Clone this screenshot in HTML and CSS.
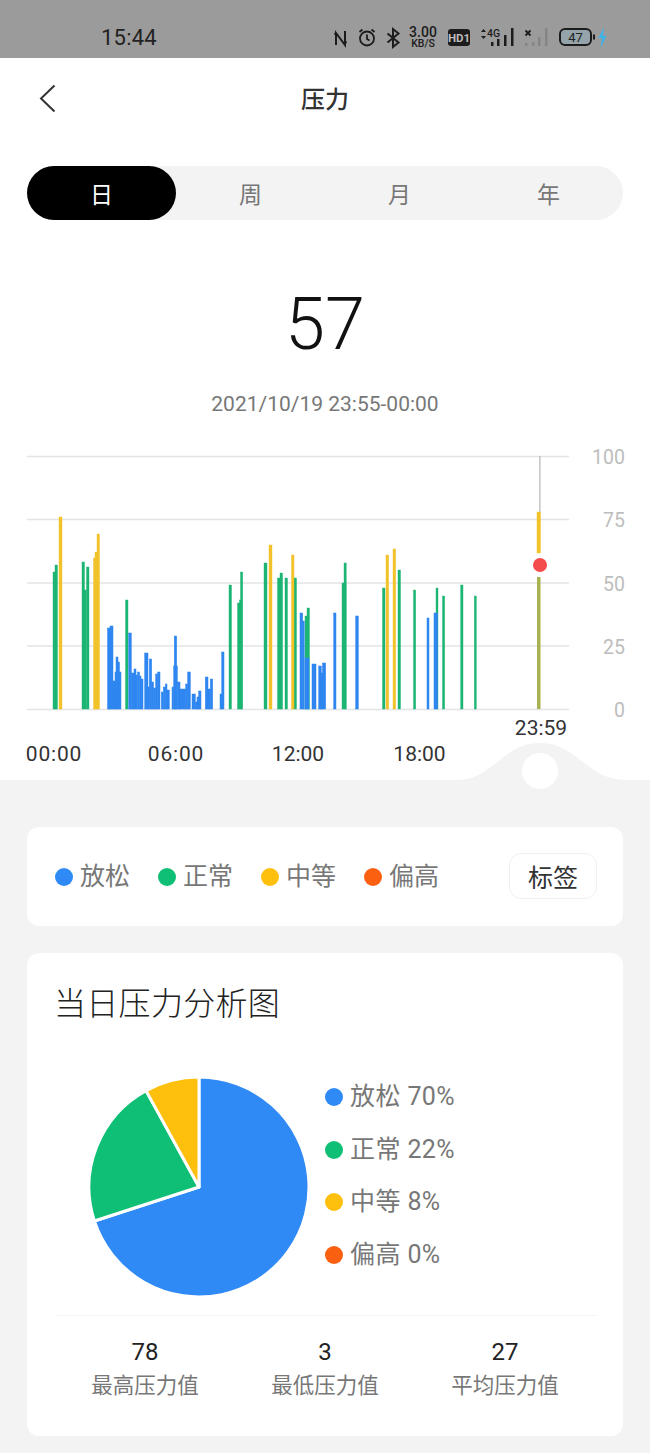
FILE: index.html
```html
<!DOCTYPE html>
<html lang="zh">
<head>
<meta charset="utf-8">
<title>压力</title>
<link rel="stylesheet" href="styles.css">
</head>
<body>
<div class="status">
  <span class="clock">15:44</span>
  <svg class="status-icons" width="280" height="26" viewBox="0 0 280 26">
    <path class="ink" d="M4 21V9l9 12V7M4 9l-1.500 1.500M13 19l1.500-1.500"/>
    <circle class="ink thin" cx="35" cy="14.500" r="7"/>
    <path class="ink thin" d="M35 10.500v4.500l2.500 1.500M27.500 8l3-2.500M42.500 8l-3-2.500"/>
    <path class="ink" d="M55.500 9.500l11 9-5.500 4.500V5l5.500 4.500-11 9"/>
    <text class="st-speed" x="91" y="13">3.00</text>
    <text class="st-unit" x="91" y="23">KB/S</text>
    <rect class="ink-fill" x="116" y="5" width="22" height="17" rx="3"/>
    <text class="st-hd" x="127" y="18">HD1</text>
    <path class="ink-fill" d="M149 8l2.500-3 2.500 3zM149 12l2.500 3 2.500-3z"/>
    <text class="st-net" x="155" y="13">4G</text>
    <rect class="ink-fill" x="159" y="18" width="2.500" height="4"/>
    <rect class="ink-fill" x="165" y="15" width="2.500" height="7"/>
    <rect class="ink-fill" x="172" y="11" width="2.500" height="11"/>
    <rect class="ink-fill" x="179" y="4" width="2.500" height="18"/>
    <path class="ink thin" d="M193.500 6.500l5 5M198.500 6.500l-5 5"/>
    <rect class="faint" x="193" y="19" width="2.500" height="3"/>
    <rect class="faint" x="200" y="18" width="2.500" height="4"/>
    <rect class="faint" x="206" y="13" width="2.500" height="9"/>
    <rect class="faint" x="213" y="4" width="2.500" height="18"/>
    <rect class="batt" x="228" y="5" width="31" height="16" rx="5"/>
    <rect class="ink-fill" x="261" y="10.500" width="2" height="5"/>
    <text class="st-batt" x="243.500" y="18">47</text>
    <path class="bolt" d="M272 3l-5.500 11h3.500l-1.500 10 6-12h-3.500z"/>
  </svg>
</div>

<main class="top">
  <header class="nav">
    <svg class="back" width="18" height="30" viewBox="0 0 18 30"><path d="M15.500 1.500L2 14.500 15.500 27.500"/></svg>
    <h1 class="title">压力</h1>
  </header>

  <div class="tabs">
    <span class="tab tab-on">日</span>
    <span class="tab">周</span>
    <span class="tab">月</span>
    <span class="tab">年</span>
  </div>

  <div class="value">57</div>
  <div class="range">2021/10/19 23:55-00:00</div>

  <svg class="chart" width="650" height="340" viewBox="0 440 650 340">
    <path class="bump" d="M457 780C492 780 503 743 540 743C577 743 588 780 625 780Z"/>
    <circle class="knob" cx="540" cy="771" r="18"/>
    <g class="grid">
      <path d="M27 456.500H569"/><path d="M27 519.500H569"/><path d="M27 583H569"/><path d="M27 646H569"/><path d="M27 709.500H569"/>
    </g>
    <g class="axis-y">
      <text x="625" y="464">100</text><text x="625" y="527">75</text><text x="625" y="591">50</text><text x="625" y="654">25</text><text x="625" y="717">0</text>
    </g>
    <g class="axis-x">
      <text class="wide" x="54" y="761">00:00</text><text class="wide" x="176" y="761">06:00</text><text x="298" y="761">12:00</text><text x="419.500" y="761">18:00</text><text x="541" y="735">23:59</text>
    </g>
    <g class="bar-green">
      <rect x="53" y="572" width="3" height="137"/><rect x="55" y="565" width="2.500" height="144"/>
      <rect x="82" y="562" width="2.500" height="147"/><rect x="84" y="590" width="2.500" height="119"/><rect x="86.500" y="567" width="2.500" height="142"/>
      <rect x="125.500" y="600" width="2.500" height="109"/>
      <rect x="229" y="585" width="2.500" height="124"/><rect x="237.500" y="603" width="2.500" height="106"/><rect x="239.500" y="600" width="2.500" height="109"/><rect x="240.500" y="572" width="2.200" height="137"/>
      <rect x="264" y="563" width="3" height="146"/>
      <rect x="277.500" y="578" width="4.500" height="131"/><rect x="280" y="573" width="2.500" height="136"/>
      <rect x="285" y="578" width="2.500" height="131"/>
      <rect x="293.500" y="578" width="3" height="131"/>
      <rect x="305" y="616" width="3" height="93"/><rect x="307" y="608" width="2.500" height="101"/>
      <rect x="342" y="583" width="4" height="126"/><rect x="344" y="563" width="2.200" height="146"/>
      <rect x="382.500" y="588" width="2.500" height="121"/><rect x="398" y="570" width="2.500" height="139"/>
      <rect x="413.500" y="590" width="2.200" height="119"/><rect x="436" y="588" width="2" height="121"/>
      <rect x="442.500" y="596" width="2.200" height="113"/><rect x="460.700" y="585" width="2.300" height="124"/><rect x="474.300" y="596" width="2" height="113"/>
    </g>
    <g class="bar-yellow">
      <rect x="59" y="517" width="3" height="192"/>
      <rect x="93.500" y="558" width="2.500" height="151"/><rect x="95" y="552" width="3" height="157"/><rect x="97" y="534" width="2.500" height="175"/>
      <rect x="269" y="545" width="3" height="164"/><rect x="291.500" y="555" width="2.500" height="154"/>
      <rect x="386" y="555" width="2.700" height="154"/><rect x="393" y="549" width="2.700" height="160"/>
      <rect x="537" y="512" width="3.500" height="41"/>
    </g>
    <g class="bar-blue">
      <rect x="107.500" y="628" width="2.500" height="81"/><rect x="109" y="640" width="2" height="69"/><rect x="110" y="626" width="3" height="83"/>
      <rect x="113" y="681" width="2" height="28"/><rect x="115" y="672" width="2" height="37"/><rect x="116" y="657" width="2" height="52"/><rect x="118" y="662" width="1.500" height="47"/><rect x="119" y="672" width="2" height="37"/>
      <rect x="128.700" y="633" width="2.600" height="76"/><rect x="131.300" y="673" width="3" height="36"/><rect x="134" y="669" width="2" height="40"/><rect x="136" y="675" width="1.500" height="34"/><rect x="137.500" y="672" width="2" height="37"/><rect x="139.500" y="676" width="1.500" height="33"/><rect x="141" y="679" width="2" height="30"/>
      <rect x="144.700" y="653" width="3.300" height="56"/><rect x="148" y="687" width="1.500" height="22"/><rect x="149.300" y="659" width="2.400" height="50"/><rect x="151.500" y="682" width="2" height="27"/><rect x="153.500" y="688" width="2.200" height="21"/><rect x="155.700" y="674" width="2" height="35"/><rect x="157.700" y="672" width="2.300" height="37"/>
      <rect x="161.300" y="692" width="2" height="17"/><rect x="163.300" y="687" width="2" height="22"/><rect x="165.300" y="684" width="1.700" height="25"/><rect x="167" y="690" width="2.300" height="19"/>
      <rect x="172" y="687" width="1.700" height="22"/><rect x="173.700" y="666" width="3.600" height="43"/><rect x="174.300" y="636" width="2.400" height="73"/><rect x="177.300" y="682" width="2.700" height="27"/><rect x="180" y="689" width="5.700" height="20"/><rect x="185.700" y="684" width="2" height="25"/><rect x="187.700" y="672" width="2.600" height="37"/>
      <rect x="192" y="694" width="3.300" height="15"/><rect x="195.300" y="702" width="1.700" height="7"/><rect x="197" y="697" width="2" height="12"/><rect x="198.700" y="691" width="2.300" height="18"/>
      <rect x="205.300" y="677" width="2.700" height="32"/><rect x="208" y="689" width="2.300" height="20"/><rect x="210.300" y="679" width="2.400" height="30"/>
      <rect x="220" y="694" width="2.500" height="15"/><rect x="221.700" y="652" width="2.300" height="57"/>
      <rect x="300" y="613" width="2.700" height="96"/><rect x="302.700" y="621" width="1.500" height="88"/><rect x="305" y="658" width="4" height="51"/>
      <rect x="312" y="664" width="4" height="45"/><rect x="318.700" y="666" width="2.600" height="43"/><rect x="320.700" y="673" width="2.300" height="36"/><rect x="322.500" y="663" width="3.200" height="46"/>
      <rect x="333.700" y="613" width="2.300" height="96"/><rect x="355.700" y="616" width="2.600" height="93"/>
      <rect x="427" y="618" width="2" height="91"/><rect x="434" y="613" width="3.500" height="96"/>
    </g>
    <rect class="bar-olive" x="537" y="577" width="3.500" height="132"/>
    <rect class="marker-line" x="539.300" y="456" width="1.200" height="56"/>
    <circle class="dot-halo" cx="540" cy="565" r="10"/>
    <circle class="dot-red" cx="540" cy="565" r="7"/>
  </svg>
</main>

<section class="lower">
  <div class="card legend">
    <div class="legend-items">
      <span class="key"><i class="dot c-blue"></i>放松</span>
      <span class="key"><i class="dot c-green"></i>正常</span>
      <span class="key"><i class="dot c-yellow"></i>中等</span>
      <span class="key"><i class="dot c-orange"></i>偏高</span>
    </div>
    <span class="tag">标签</span>
  </div>

  <div class="card analysis">
    <h2 class="card-title">当日压力分析图</h2>
    <div class="pie-row">
      <svg class="pie" width="220" height="220" viewBox="0 0 220 220">
        <path class="c-blue-fill" d="M110 110V0A110 110 0 1 1 5.400 144Z"/>
        <path class="c-green-fill" d="M110 110L5.400 144A110 110 0 0 1 57 13.600Z"/>
        <path class="c-yellow-fill" d="M110 110L57 13.600A110 110 0 0 1 110 0Z"/>
      </svg>
      <div class="pie-keys">
        <span class="key"><i class="dot c-blue"></i>放松 70%</span>
        <span class="key"><i class="dot c-green"></i>正常 22%</span>
        <span class="key"><i class="dot c-yellow"></i>中等 8%</span>
        <span class="key"><i class="dot c-orange"></i>偏高 0%</span>
      </div>
    </div>
    <div class="stats">
      <div class="stat"><span class="stat-num">78</span><span class="stat-label">最高压力值</span></div>
      <div class="stat"><span class="stat-num">3</span><span class="stat-label">最低压力值</span></div>
      <div class="stat"><span class="stat-num">27</span><span class="stat-label">平均压力值</span></div>
    </div>
  </div>
</section>
</body>
</html>
```
FILE: styles.css
```css
* { box-sizing: border-box; }
html, body { margin: 0; padding: 0; }
body {
  width: 650px;
  height: 1453px;
  overflow: hidden;
  background: #f3f3f3;
  font-family: Roboto, "Noto Sans CJK SC", sans-serif;
  color: #222;
}

/* status bar */
.status {
  height: 58px;
  padding: 16px 38px 0 101px;
  background: #9b9b9b;
  display: flex;
  align-items: center;
  justify-content: space-between;
}
.clock { font-size: 22px; color: #222; letter-spacing: 0.2px; }
.status-icons { display: block; }
.ink { fill: none; stroke: #1c1c1c; stroke-width: 2; }
.ink.thin { stroke-width: 1.8; }
.ink-fill { fill: #1c1c1c; }
.faint { fill: #858585; }
.batt { fill: #95a3ab; stroke: #1c1c1c; stroke-width: 2; }
.bolt { fill: #3fb2ea; }
.st-speed, .st-unit, .st-hd, .st-net, .st-batt { font-family: Roboto, sans-serif; fill: #1c1c1c; text-anchor: middle; }
.st-speed { font-size: 14px; font-weight: 500; }
.st-unit { font-size: 10.500px; font-weight: 500; }
.st-hd { fill: #bdbdbd; font-size: 11.500px; font-weight: 700; }
.st-net { font-size: 10.500px; font-weight: 500; text-anchor: start; }
.st-batt { font-size: 13px; fill: #222; }

/* top white area */
.top { background: #fff; height: 722px; }
.nav {
  height: 84px;
  display: flex;
  align-items: center;
  justify-content: center;
  position: relative;
}
.back { position: absolute; left: 39px; top: 26px; fill: none; }
.back path { fill: none; stroke: #333; stroke-width: 2; }
.title { margin: 0; font-size: 24px; font-weight: 500; color: #333; line-height: 84px; }

.tabs {
  margin: 24px 27px 0;
  height: 54px;
  border-radius: 27px;
  background: #f3f3f3;
  display: grid;
  grid-template-columns: repeat(4, 1fr);
}
.tab {
  display: flex;
  align-items: center;
  justify-content: center;
  font-size: 23px;
  color: #777;
  border-radius: 27px;
}
.tab-on { background: #000; color: #fff; }

.value {
  margin-top: 66px;
  height: 78px;
  line-height: 78px;
  text-align: center;
  font-size: 72px;
  font-weight: 350;
  color: #111;
}
.range {
  margin-top: 23px;
  height: 34px;
  line-height: 34px;
  text-align: center;
  font-size: 21px;
  color: #777;
}

.chart { display: block; margin-top: 19px; overflow: visible; }
.grid path { fill: none; stroke: #e4e4e4; stroke-width: 1.5; }
.axis-y text { font-size: 19.500px; fill: #bdbdbd; text-anchor: end; }
.axis-x text { font-size: 21px; fill: #333; text-anchor: middle; }
.axis-x .wide { letter-spacing: 0.8px; }
.bar-green { fill: #1db574; stroke: #1db574; stroke-width: 0.4; }
.bar-yellow { fill: #f2c22b; stroke: #f2c22b; stroke-width: 0.4; }
.bar-blue { fill: #2f86f0; stroke: #2f86f0; stroke-width: 0.5; }
.bar-olive { fill: #a9b250; }
.marker-line { fill: #b5b5b5; }
.bump { fill: #f3f3f3; }
.knob { fill: #fff; }
.dot-halo { fill: #fff; }
.dot-red { fill: #f44c4c; }

/* lower grey area */
.lower {
  padding: 47px 27px 0;
  display: flex;
  flex-direction: column;
  gap: 27px;
}
.card { background: #fff; border-radius: 12px; }
.legend {
  height: 99px;
  padding: 0 26px 0 28px;
  display: flex;
  align-items: center;
  justify-content: space-between;
}
.legend-items { display: flex; gap: 28px; }
.key {
  display: flex;
  align-items: center;
  gap: 7px;
  font-size: 25px;
  line-height: 34px;
  color: #777;
}
.dot { width: 18px; height: 18px; border-radius: 50%; flex: none; }
.c-blue { background: #2f8af5; }
.c-green { background: #10bf76; }
.c-yellow { background: #ffbf0d; }
.c-orange { background: #fa6010; }
.tag {
  width: 88px;
  height: 46px;
  margin-top: -1px;
  border: 1px solid #f0f0f0;
  border-radius: 12px;
  display: flex;
  align-items: center;
  justify-content: center;
  font-size: 25px;
  color: #333;
}

.analysis { height: 483px; padding: 0 26px 0 28px; }
.card-title {
  margin: 0 0 0 -1px;
  padding-top: 29px;
  font-size: 32px;
  letter-spacing: 0.3px;
  line-height: 44px;
  font-weight: 300;
  color: #222;
}
.pie-row {
  margin-top: 51px;
  padding-left: 33.500px;
  display: flex;
  align-items: flex-start;
}
.pie { display: block; flex: none; }
.pie path { stroke: #fff; stroke-width: 3; stroke-linejoin: round; }
.c-blue-fill { fill: #2f8af5; }
.c-green-fill { fill: #10bf76; }
.c-yellow-fill { fill: #ffbf0d; }
.pie-keys {
  margin-left: 16.500px;
  margin-top: 3px;
  display: flex;
  flex-direction: column;
  gap: 18.600px;
  letter-spacing: 0.4px;
}
.stats {
  margin-top: 18px;
  border-top: 1px solid #f5f5f5;
  padding-top: 19px;
  display: grid;
  grid-template-columns: repeat(3, 180px);
}
.stat { display: flex; flex-direction: column; align-items: center; }
.stat-num { font-size: 24px; line-height: 34px; color: #222; }
.stat-label { font-size: 21.500px; line-height: 34px; color: #777; }
```
